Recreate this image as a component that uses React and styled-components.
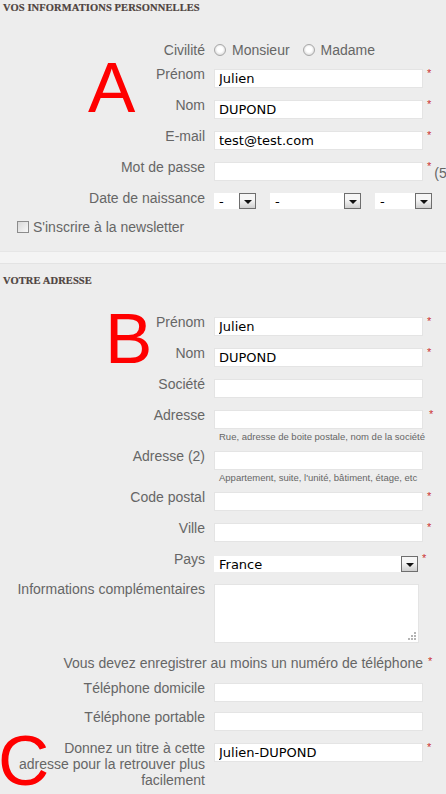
import React from "react";
import styled, { createGlobalStyle } from "styled-components";

const GlobalStyle = createGlobalStyle`
  html, body {
    margin: 0;
    padding: 0;
    background: #ededed;
  }
  body {
    overflow: hidden;
    font-family: "Liberation Sans", Arial, sans-serif;
  }
`;

const Page = styled.div`
  position: relative;
  width: 446px;
  height: 794px;
  overflow: hidden;
  background: #ededed;
`;

const Heading = styled.h3`
  margin: ${(p) => (p.$second ? "11px" : "0")} 0 0;
  padding: ${(p) => (p.$second ? "0" : "2px")} 3px 0;
  height: 12px;
  font-family: "Liberation Serif", "Times New Roman", serif;
  font-size: 10.5px;
  line-height: 12px;
  letter-spacing: 0.1px;
  font-weight: bold;
  color: #4f4440;
  text-transform: uppercase;
  -webkit-text-stroke: 0.2px #4f4440;
`;

const Fields = styled.div`
  padding: ${(p) => p.$top}px 0 0 15px;
`;

const Row = styled.div`
  display: flex;
  align-items: ${(p) => (p.$center ? "center" : "flex-start")};
  min-height: ${(p) => (p.$center ? "16px" : "0")};
  margin-bottom: ${(p) => (p.$gap ?? 12)}px;
`;

const Label = styled.label`
  flex: 0 0 190px;
  width: 190px;
  margin: ${(p) => (p.$center ? "0" : "-3px")} 9px 0 0;
  text-align: right;
  font-size: 14px;
  line-height: 16px;
  color: #666;
`;

const Field = styled.div`
  flex: 0 0 ${(p) => p.$w || 209}px;
  display: flex;
  flex-direction: column;
  padding-top: ${(p) => p.$pt || 0}px;
`;

const TextInput = styled.input`
  box-sizing: border-box;
  width: 209px;
  height: 19px;
  margin: 0;
  padding: 0 4px;
  border: 1px solid #e4e4e4;
  background: #fff;
  font-family: "DejaVu Sans", Verdana, sans-serif;
  font-size: 13px;
  color: #000;
  outline: none;
`;

const Hint = styled.span`
  margin-top: 2px;
  padding-left: 5px;
  font-size: 9.5px;
  line-height: 12px;
  color: #666;
  white-space: nowrap;
`;

const Star = styled.span`
  margin: ${(p) => p.$mt ?? -1}px 0 0 ${(p) => p.$ml ?? 4}px;
  font-size: 11px;
  line-height: 11px;
  color: #cc3333;
`;

const Note = styled.span`
  margin: 3px 0 0 3px;
  font-size: 14px;
  line-height: 16px;
  color: #666;
  white-space: nowrap;
`;

const Choices = styled.div`
  display: flex;
  align-items: center;
  font-size: 14px;
  line-height: 16px;
  color: #666;
`;

const Radio = styled.span`
  box-sizing: border-box;
  width: 12px;
  height: 12px;
  margin: 0 6px 0 ${(p) => (p.$first ? 0 : 13)}px;
  border-radius: 50%;
  border: 1px solid #a8a8a8;
  background: radial-gradient(circle at 50% 45%, #ffffff 0 35%, #dedede 75%);
`;

const SelectRow = styled.div`
  display: flex;
  gap: 14px;
`;

const SelectBox = styled.div`
  box-sizing: border-box;
  width: ${(p) => p.$w}px;
  height: 16px;
  display: flex;
  align-items: center;
  justify-content: space-between;
  background: #fff;
  font-family: "DejaVu Sans", Verdana, sans-serif;
  font-size: 13px;
  color: #000;
  span:first-child {
    padding-left: 5px;
  }
`;

const ArrowBtn = styled.span`
  box-sizing: border-box;
  flex: 0 0 17px;
  height: 16px;
  display: flex;
  align-items: center;
  justify-content: center;
  border: 1px solid #6e6e6e;
  background: linear-gradient(#f6f6f6 0 40%, #cfcfcf);
  &::after {
    content: "";
    margin-top: 2px;
    border-left: 4px solid transparent;
    border-right: 4px solid transparent;
    border-top: 4px solid #111;
  }
`;

const Newsletter = styled.div`
  display: flex;
  align-items: center;
  height: 16px;
  margin-left: 2px;
  font-size: 14px;
  line-height: 16px;
  color: #666;
`;

const Checkbox = styled.span`
  box-sizing: border-box;
  width: 12px;
  height: 12px;
  margin-right: 4px;
  border: 1px solid #8c8c8c;
  background: linear-gradient(135deg, #d8d8d8, #f8f8f8);
`;

const Band = styled.div`
  margin-top: 16px;
  height: 11px;
  background: #f4f4f4;
  border-top: 1px solid #e6e6e6;
  border-bottom: 1px solid #e3e3e3;
`;

const AreaWrap = styled.div`
  position: relative;
  width: 205px;
  height: 59px;
`;

const TextArea = styled.textarea`
  box-sizing: border-box;
  width: 205px;
  height: 59px;
  margin: 0;
  border: 1px solid #e4e4e4;
  background: #fff;
  resize: none;
  outline: none;
`;

const Grip = styled.svg`
  position: absolute;
  right: 3px;
  bottom: 3px;
`;

const Notice = styled.div`
  width: 408px;
  text-align: right;
  font-size: 14px;
  line-height: 16px;
  color: #666;
`;

const Marker = styled.span`
  position: absolute;
  top: ${(p) => p.$top}px;
  left: ${(p) => p.$left}px;
  font-family: "Liberation Sans", Arial, sans-serif;
  font-size: 71px;
  line-height: 71px;
  color: #ff0000;
  pointer-events: none;
`;

const InputRow = ({ label, value, required, gap, hint, note }) => (
  <Row $gap={gap}>
    <Label>{label}</Label>
    <Field>
      <TextInput readOnly defaultValue={value || ""} />
      {hint && <Hint>{hint}</Hint>}
    </Field>
    {required && <Star>*</Star>}
    {note && <Note>{note}</Note>}
  </Row>
);

const Select = ({ w, value }) => (
  <SelectBox $w={w}>
    <span>{value}</span>
    <ArrowBtn />
  </SelectBox>
);

const App = () => {
  return (
    <Page>
      <GlobalStyle />
      <Heading>Vos informations personnelles</Heading>
      <Fields $top={28}>
        <Row $center $gap={11}>
          <Label $center>Civilité</Label>
          <Choices>
            <Radio $first />
            Monsieur
            <Radio />
            Madame
          </Choices>
        </Row>
        <InputRow label="Prénom" value="Julien" required />
        <InputRow label="Nom" value="DUPOND" required />
        <InputRow label="E-mail" value="test@test.com" required />
        <InputRow label="Mot de passe" required note="(5 caractères min.)" />
        <Row $gap={10}>
          <Label>Date de naissance</Label>
          <SelectRow>
            <Select w={42} value="-" />
            <Select w={91} value="-" />
            <Select w={57} value="-" />
          </SelectRow>
        </Row>
        <Newsletter>
          <Checkbox />
          S'inscrire à la newsletter
        </Newsletter>
      </Fields>
      <Band />

      <Heading $second>Votre adresse</Heading>
      <Fields $top={30}>
        <InputRow label="Prénom" value="Julien" required />
        <InputRow label="Nom" value="DUPOND" required />
        <InputRow label="Société" />
        <InputRow
          label="Adresse"
          required
          gap={8}
          hint="Rue, adresse de boite postale, nom de la société"
        />
        <InputRow
          label="Adresse (2)"
          gap={8}
          hint="Appartement, suite, l'unité, bâtiment, étage, etc"
        />
        <InputRow label="Code postal" required />
        <InputRow label="Ville" required />
        <Row>
          <Label>Pays</Label>
          <Field $w={209} $pt={2}>
            <Select w={204} value="France" />
          </Field>
          <Star $ml={-1}>*</Star>
        </Row>
        <Row>
          <Label>Informations complémentaires</Label>
          <AreaWrap>
            <TextArea />
            <Grip width="9" height="9" viewBox="0 0 9 9">
              <g fill="#b4b4b4">
                <rect x="7" y="1" width="2" height="2" />
                <rect x="4" y="4" width="2" height="2" />
                <rect x="7" y="4" width="2" height="2" />
                <rect x="1" y="7" width="2" height="2" />
                <rect x="4" y="7" width="2" height="2" />
                <rect x="7" y="7" width="2" height="2" />
              </g>
            </Grip>
          </AreaWrap>
        </Row>
        <Row>
          <Notice>Vous devez enregistrer au moins un numéro de téléphone</Notice>
          <Star $mt={1} $ml={5}>*</Star>
        </Row>
        <InputRow label="Téléphone domicile" gap={10} />
        <InputRow label="Téléphone portable" />
        <InputRow
          label="Donnez un titre à cette adresse pour la retrouver plus facilement"
          value="Julien-DUPOND"
          required
        />
      </Fields>

      <Marker $top={52} $left={88}>A</Marker>
      <Marker $top={303} $left={105}>B</Marker>
      <Marker $top={725} $left={-2}>C</Marker>
    </Page>
  );
};

export default App;
